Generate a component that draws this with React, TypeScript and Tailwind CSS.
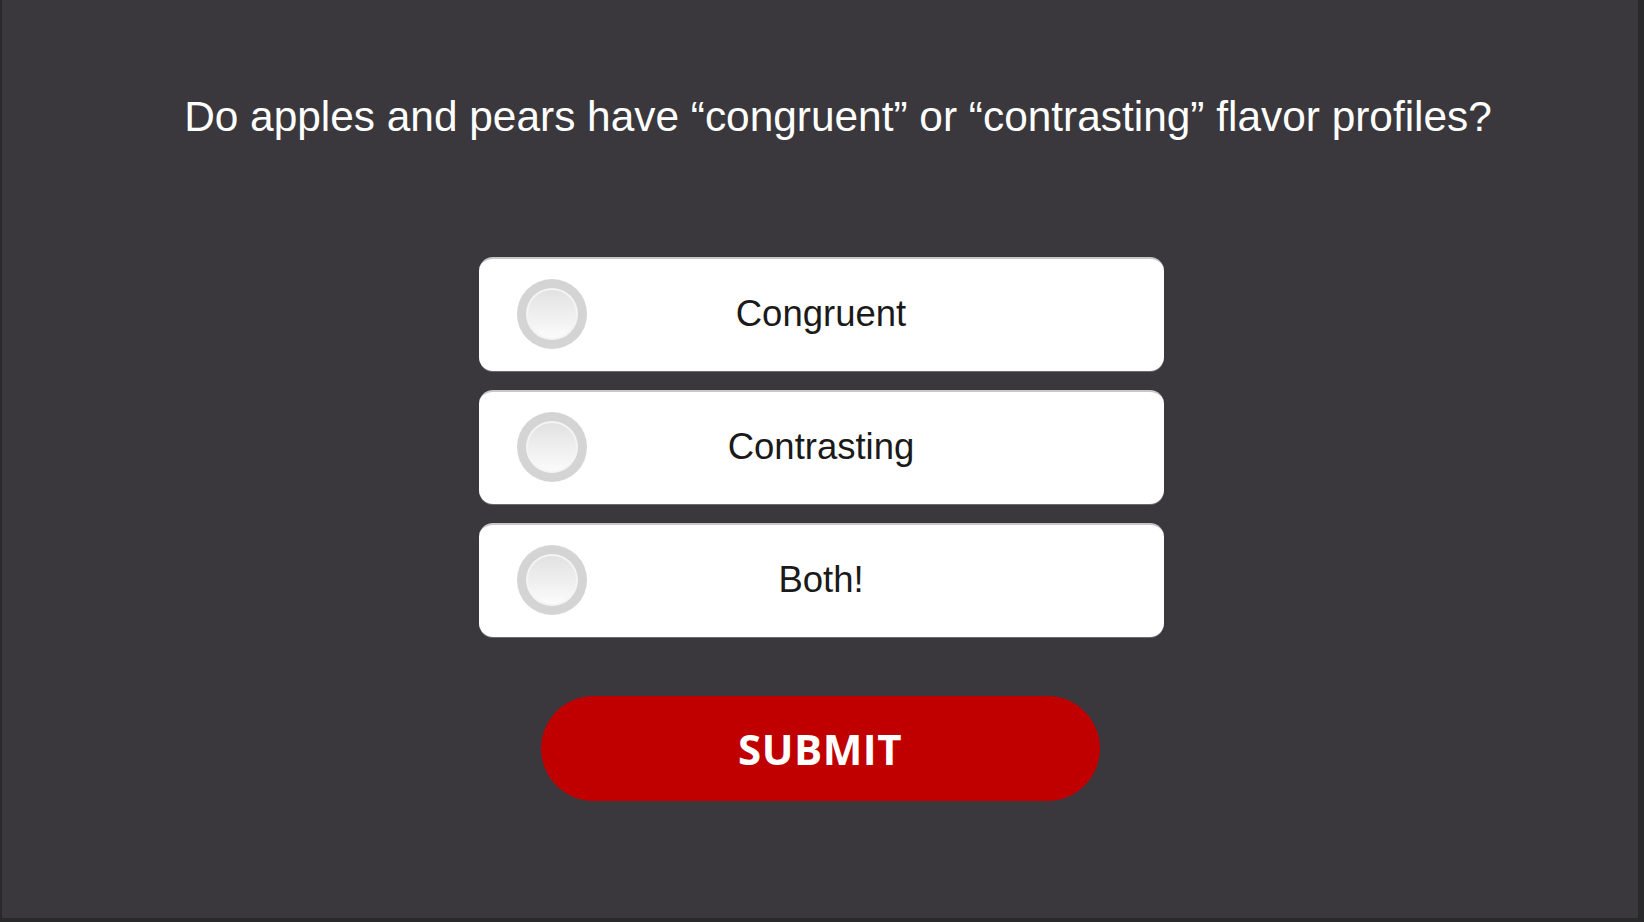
import { useState } from "react";

const OPTIONS = ["Congruent", "Contrasting", "Both!"];

function Radio({ checked }: { checked: boolean }) {
  return (
    <div className="flex h-[70px] w-[70px] items-center justify-center rounded-full bg-[#d4d4d4]">
      <div className="flex h-[52px] w-[52px] items-center justify-center rounded-full bg-[#f4f4f4]">
        <div
          className={`h-[48px] w-[48px] rounded-full ${
            checked
              ? "bg-[#c00000]"
              : "bg-gradient-to-b from-[#e2e2e2] to-[#fbfbfb]"
          }`}
        />
      </div>
    </div>
  );
}

export default function App() {
  const [selected, setSelected] = useState<string | null>(null);

  return (
    <div className="h-[922px] w-full bg-[#29282a] pl-[2px] pr-[6px] pb-[4px] font-['Liberation_Sans',Arial,sans-serif]">
      <main className="flex h-full flex-col items-center bg-[#3a383d] pt-[96px]">
        <h1 className="pl-[36px] text-[42.4px] leading-none text-white">
          Do apples and pears have “congruent” or “contrasting” flavor profiles?
        </h1>

        {/* Answers */}
        <div className="mt-[119px] flex flex-col gap-[19px]">
          {OPTIONS.map((option) => (
            <button
              key={option}
              onClick={() => setSelected(option)}
              className="ml-[2px] grid h-[114px] w-[685px] grid-cols-[108px_1fr_108px] items-center rounded-[14px] border-t-2 border-[#c8c8c8] bg-white pb-[2px] shadow-[0_1px_0_#6b6a6e]"
            >
              <div className="pl-[38px]">
                <Radio checked={selected === option} />
              </div>
              <span className="text-[36.5px] text-[#1a1a1a]">{option}</span>
              <span />
            </button>
          ))}
        </div>

        <button className="mt-[59px] flex h-[105px] w-[559px] items-center justify-center rounded-full bg-[#c00000] font-['Open_Sans',sans-serif] text-[42px] font-bold tracking-[0.5px] text-white">
          SUBMIT
        </button>
      </main>
    </div>
  );
}
